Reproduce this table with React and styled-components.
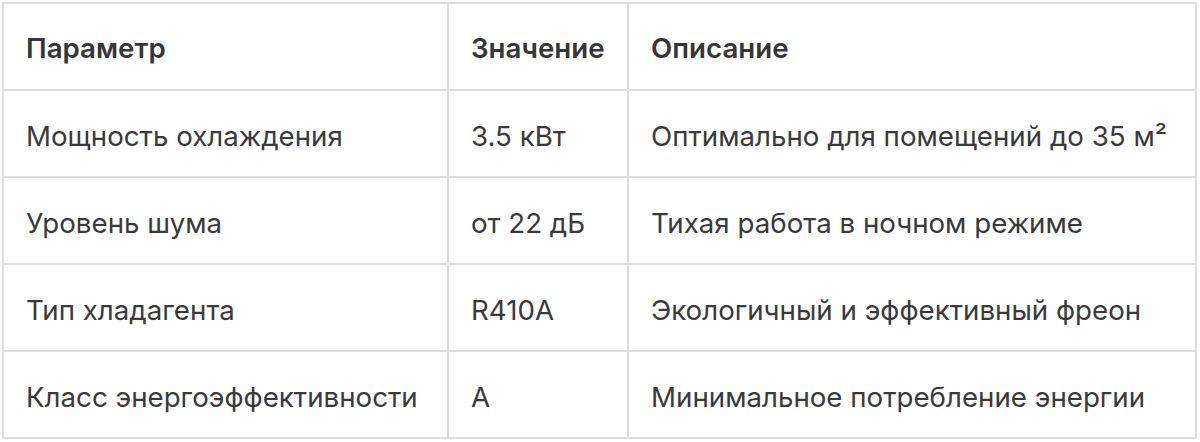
import styled, { createGlobalStyle } from "styled-components";

const GlobalStyle = createGlobalStyle`
  body {
    margin: 0;
    background: #fff;
    font-family: Inter, "Noto Sans", sans-serif;
  }
`;

const specs = [
  ["Мощность охлаждения", "3.5 кВт", "Оптимально для помещений до 35 м²"],
  ["Уровень шума", "от 22 дБ", "Тихая работа в ночном режиме"],
  ["Тип хладагента", "R410A", "Экологичный и эффективный фреон"],
  ["Класс энергоэффективности", "A", "Минимальное потребление энергии"],
];

export default function App() {
  return (
    <>
      <GlobalStyle />
      <Wrapper>
        <Table>
          <colgroup>
            <Col $width="445px" />
            <Col $width="180px" />
            <Col />
          </colgroup>
          <thead>
            <tr>
              <Th>Параметр</Th>
              <Th>Значение</Th>
              <Th>Описание</Th>
            </tr>
          </thead>
          <tbody>
            {specs.map(([name, value, desc]) => (
              <tr key={name}>
                <Td>{name}</Td>
                <Td>{value}</Td>
                <Td>{desc}</Td>
              </tr>
            ))}
          </tbody>
        </Table>
      </Wrapper>
    </>
  );
}

const Wrapper = styled.div`
  padding: 2px 3px 2px 2px;
`;

const Table = styled.table`
  width: 100%;
  border-collapse: collapse;
  table-layout: fixed;
`;

const Col = styled.col`
  width: ${(p) => p.$width || "auto"};
`;

const Th = styled.th`
  height: 87px;
  box-sizing: border-box;
  padding: 2px 22px 0;
  border: 2px solid #dedede;
  text-align: left;
  font-size: 27.7px;
  font-weight: 600;
  color: #363636;
`;

const Td = styled.td`
  height: 87px;
  box-sizing: border-box;
  padding: 4px 22px 0;
  border: 2px solid #dedede;
  font-size: 27.7px;
  color: #3a3a3a;
  white-space: nowrap;
`;
